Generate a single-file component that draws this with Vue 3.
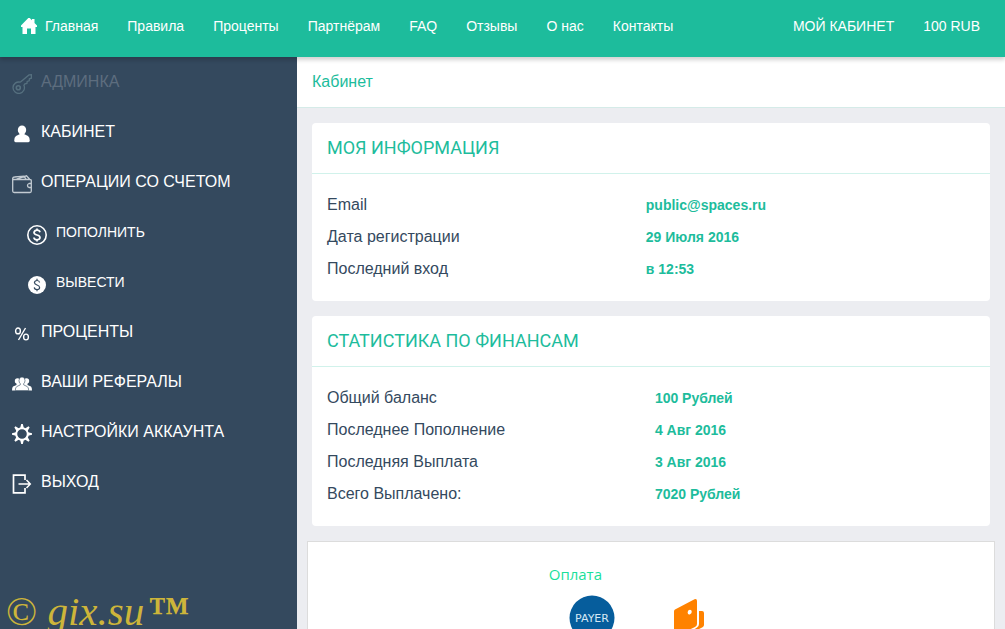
<script setup>
const links = ['Правила', 'Проценты', 'Партнёрам', 'FAQ', 'Отзывы', 'О нас', 'Контакты']

const menu = [
  { icon: 'key', label: 'АДМИНКА', muted: true },
  { icon: 'user', label: 'КАБИНЕТ' },
  { icon: 'wallet', label: 'ОПЕРАЦИИ СО СЧЕТОМ' },
  { icon: 'coin', label: 'ПОПОЛНИТЬ', sub: true },
  { icon: 'coinFilled', label: 'ВЫВЕСТИ', sub: true },
  { icon: 'percent', label: 'ПРОЦЕНТЫ' },
  { icon: 'group', label: 'ВАШИ РЕФЕРАЛЫ' },
  { icon: 'gear', label: 'НАСТРОЙКИ АККАУНТА' },
  { icon: 'exit', label: 'ВЫХОД' }
]

const cards = [
  {
    title: 'МОЯ ИНФОРМАЦИЯ',
    kind: 'info',
    rows: [
      ['Email', 'public@spaces.ru'],
      ['Дата регистрации', '29 Июля 2016'],
      ['Последний вход', 'в 12:53']
    ]
  },
  {
    title: 'СТАТИСТИКА ПО ФИНАНСАМ',
    kind: 'finance',
    rows: [
      ['Общий баланс', '100 Рублей'],
      ['Последнее Пополнение', '4 Авг 2016'],
      ['Последняя Выплата', '3 Авг 2016'],
      ['Всего Выплачено:', '7020 Рублей']
    ]
  }
]

const teeth = [0, 45, 90, 135, 180, 225, 270, 315]
</script>

<template>
  <div class="page">
    <header class="topbar">
      <nav class="links">
        <a href="#" class="home">
          <svg width="16" height="16" viewBox="0 0 16 16" aria-hidden="true">
            <path fill="#fff" d="M7.300 0h1.400L11 2.300V1h2.500v4L16 7.500V9h-1.500v7H10v-5.500H6V16H1.500V9H0V7.500Z" />
          </svg>
          Главная
        </a>
        <a v-for="l in links" :key="l" href="#">{{ l }}</a>
      </nav>
      <nav class="account">
        <a href="#">МОЙ КАБИНЕТ</a>
        <a href="#">100 RUB</a>
      </nav>
    </header>

    <div class="body">
      <aside class="sidebar">
        <nav>
          <a v-for="m in menu" :key="m.label" href="#" class="item" :class="{ muted: m.muted, sub: m.sub }">
            <svg class="icon" width="20" height="20" viewBox="0 0 20 20" aria-hidden="true">
              <g v-if="m.icon === 'key'" fill="none" stroke="#56707f" stroke-width="1.300">
                <circle cx="6.300" cy="13.700" r="2" stroke-width="1.600" />
                <path d="M8.200 8.200 17 .9l2.400-.2v3.500l-2 .6-.2 2-2 .6-.3 2-2 .5-1 1.400A5.700 5.700 0 1 1 8.200 8.200" />
              </g>
              <g v-else-if="m.icon === 'user'" fill="#fff">
                <ellipse cx="10" cy="6" rx="4.200" ry="4.600" />
                <path d="M8 9h4v1l4 1.900q1.800 1.300 1.800 4.800-.3 1.500-1.800 1.500H4q-1.500 0-1.800-1.500 0-3.500 1.800-4.800l4-1.900Z" />
              </g>
              <g v-else-if="m.icon === 'wallet'" fill="none" stroke="#c3cbd2" stroke-width="1.300">
                <path d="M19.300 10V6.500q0-1-1.200-1H2Q.7 5.500.7 4.200M.7 4v13q0 1.500 1.500 1.500H18q1.300 0 1.300-1.500V13M.7 4.200Q1 3 2.500 3L12 2.200l2 3M4.500 5.200 14.500 1.800l3.200 3.500M19.300 9.500H17q-1.500.5-1.500 2t1.500 2h2.300Z" />
              </g>
              <g v-else-if="m.icon === 'coin'" fill="none" stroke="#fff">
                <circle cx="10" cy="10" r="9.200" stroke-width="1.600" />
                <path stroke-width="1.700" d="M13 7.300Q12.500 5.200 10 5.200T7 7.500Q7 9.200 10 10t3 2.600q0 2.200-3 2.200t-3.100-2.300M10 3.500v2M10 14.500v2" />
              </g>
              <g v-else-if="m.icon === 'coinFilled'">
                <circle cx="10" cy="10" r="9" fill="#fff" />
                <path fill="none" stroke="#34495e" stroke-width="1.200" d="M12.600 7.500Q12.300 5.500 10 5.500T7.400 7.600Q7.400 9.200 10 10t2.600 2.400q0 2.100-2.600 2.100t-2.700-2.100M10 3.800v2M10 14.200v2" />
              </g>
              <g v-else-if="m.icon === 'percent'" fill="none" stroke="#fff" stroke-width="1.400">
                <ellipse cx="6" cy="6.900" rx="2.400" ry="2.900" />
                <ellipse cx="14" cy="13" rx="2.400" ry="2.900" />
                <path d="M13.500 4 6.500 16" />
              </g>
              <g v-else-if="m.icon === 'group'" fill="#fff">
                <circle cx="5.500" cy="7" r="2.700" />
                <circle cx="14.500" cy="7" r="2.700" />
                <path d="M4.500 9h11v2l3.500 1.500q1 1 1 4H0q0-3 1-4L4.500 11Z" />
                <path stroke="#34495e" stroke-width=".6" d="M10 3q3 0 3 3.500 0 2-1.300 3.200v1.200l3.500 1.600q1.500 1 1.500 4H3.300q0-3 1.500-4l3.500-1.600V9.700Q7 8.500 7 6.500 7 3 10 3Z" />
              </g>
              <g v-else-if="m.icon === 'gear'">
                <circle cx="10" cy="10" r="5.800" fill="none" stroke="#fff" stroke-width="2" />
                <path v-for="t in teeth" :key="t" fill="#fff" d="M8 4.800 9.200 0h1.600L12 4.800Z" :transform="`rotate(${t} 10 10)`" />
              </g>
              <g v-else fill="none" stroke="#fff" stroke-width="1.500">
                <path d="M13 6V1.200H1.500V18.800H13V14" stroke-width="1.700" />
                <path d="M6.500 10H18M14.500 6 18.300 10 14.500 14" />
              </g>
            </svg>
            <span>{{ m.label }}</span>
          </a>
        </nav>
        <div class="copyright">© <i>gix.su</i><b>™</b></div>
      </aside>

      <main class="content">
        <div class="crumb">Кабинет</div>
        <section v-for="c in cards" :key="c.title" class="card">
          <h2>{{ c.title }}</h2>
          <div class="card-body">
            <table :class="c.kind">
              <tbody>
                <tr v-for="r in c.rows" :key="r[0]">
                  <th scope="row">{{ r[0] }}</th>
                  <td>{{ r[1] }}</td>
                </tr>
              </tbody>
            </table>
          </div>
        </section>

        <section class="payment">
          <h3>Оплата</h3>
          <div class="logos">
            <svg width="46" height="46" viewBox="0 0 46 46" role="img" aria-label="Payer">
              <circle cx="23" cy="23" r="22.500" fill="#065d9c" />
              <text x="23" y="27" class="payer" text-anchor="middle">PAYER</text>
            </svg>
            <svg width="32" height="46" viewBox="0 0 32 46" role="img" aria-label="Кошелёк">
              <path fill="#ff8200" fill-rule="evenodd" d="M2 14.500 21.500 4.300q2.500-.8 2.500 1.700V29q0 2-2 3L1 42V16.500q0-1.300 1-2ZM17 14.700a2 2.400 20 1 0 .1 4.600 2 2.400 20 0 0-.1-4.600Z" />
              <path fill="#ff8200" d="M26 16h3q2 0 2 2v12q0 1.500-1.500 2.300L10 42 24 32.500q2-1.300 2-3.500Z" />
            </svg>
          </div>
        </section>
      </main>
    </div>
  </div>
</template>

<style>
body {
  margin: 0;
}
</style>

<style scoped>
.page {
  display: flex;
  flex-direction: column;
  height: 100vh;
  overflow: hidden;
  background: #ecedf1;
  color: #34495e;
  font-family: "Liberation Sans", Arial, sans-serif;
  font-size: 16px;
}
a {
  color: inherit;
  text-decoration: none;
}
.topbar {
  position: relative;
  z-index: 1;
  flex: none;
  display: flex;
  justify-content: space-between;
  align-items: center;
  height: 57px;
  box-sizing: border-box;
  padding: 0 25px 6px 21px;
  background: #1dbc9c;
  box-shadow: 0 3px 4px rgba(0, 0, 0, 0.18);
  color: #fff;
  font-size: 14px;
}
.links,
.account {
  display: flex;
  gap: 29px;
  white-space: nowrap;
}
.home {
  display: flex;
  align-items: center;
  gap: 8px;
}
.body {
  flex: 1;
  display: flex;
  min-height: 0;
}
.sidebar {
  position: relative;
  flex: none;
  width: 297px;
  background: #34495e;
  color: #fff;
}
.item {
  display: flex;
  align-items: center;
  gap: 9px;
  height: 50px;
  padding-left: 12px;
}
.icon {
  flex: none;
  margin-top: 4px;
}
.item.sub {
  padding-left: 27px;
  font-size: 14px;
}
.sub .icon {
  margin-top: 6px;
}
.muted {
  color: #5d6d7e;
}
.copyright {
  position: absolute;
  left: 6px;
  bottom: 0;
  color: #cdb53a;
  font-family: "Liberation Serif", "Times New Roman", serif;
  font-size: 41px;
  line-height: 36px;
  white-space: nowrap;
}
.copyright i {
  padding-right: 4px;
}
.content {
  flex: 1;
  min-width: 0;
}
.crumb {
  height: 50px;
  padding-left: 15px;
  border-bottom: 1px solid #d5ebe8;
  background: #fff;
  color: #1dbc9c;
  line-height: 49px;
}
.card {
  margin: 15px;
  border-radius: 4px;
  background: #fff;
}
h2 {
  margin: 0;
  padding: 0 15px;
  border-bottom: 1px solid #d1f2eb;
  color: #1dbc9c;
  font-family: Roboto, "Open Sans", sans-serif;
  font-size: 18px;
  font-weight: 400;
  line-height: 50px;
}
.card-body {
  padding: 15px 15px 16px;
}
table {
  width: 100%;
  table-layout: fixed;
  border-collapse: collapse;
}
th,
td {
  height: 32px;
  padding: 0;
  text-align: left;
}
th {
  font-weight: 400;
}
.info th {
  width: 49.2%;
}
.finance th {
  width: 50.6%;
}
td {
  color: #1dbc9c;
  font-size: 14px;
  font-weight: 700;
}
.payment {
  margin: 0 10px;
  padding: 23px 0 20px 34%;
  border: 1px solid #dcdcdc;
  background: #fff;
}
h3 {
  margin: 0;
  color: #1adf9a;
  font-family: "Open Sans", "Noto Sans", sans-serif;
  font-size: 15px;
  font-weight: 400;
  line-height: 18px;
}
.logos {
  display: flex;
  gap: 58px;
  padding: 12px 20px;
}
.payer {
  fill: #d5e8f5;
  font-family: "DejaVu Sans", sans-serif;
  font-size: 11px;
}
</style>
